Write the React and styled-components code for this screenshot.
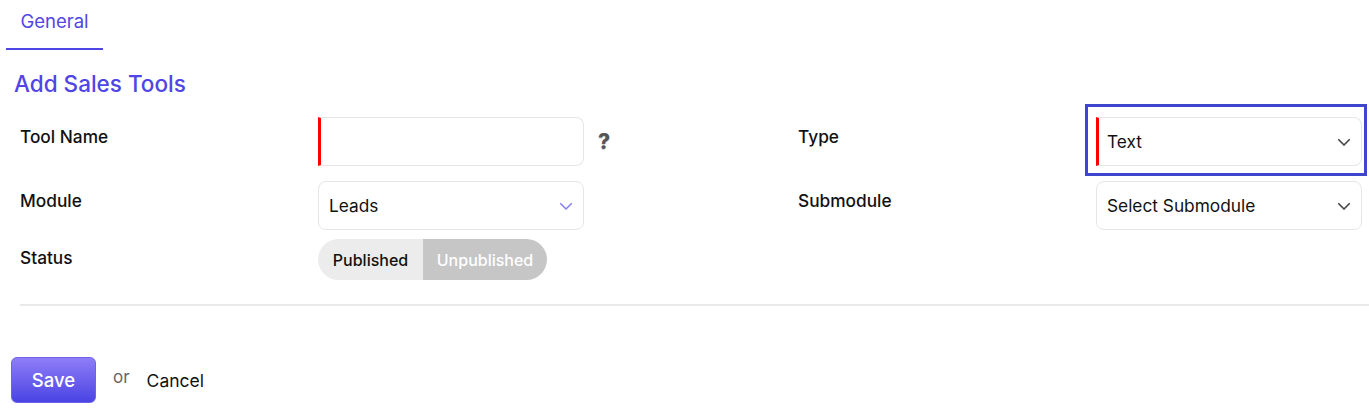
import React from 'react'
import styled, { createGlobalStyle } from 'styled-components'

const GlobalStyle = createGlobalStyle`
    body {
        margin: 0;
        background: #fff;
        font-family: Inter, "Noto Sans", sans-serif;
        color: #111;
    }
`

const Page = styled.div`
    width: 1369px;
    height: 414px;
    overflow: hidden;
`

const Tabs = styled.div`
    display: flex;
    padding-left: 6px;
`

const Tab = styled.div`
    width: 97px;
    height: 50px;
    box-sizing: border-box;
    padding-top: 10px;
    text-align: center;
    font-size: 18.5px;
    color: #4f46e5;
    border-bottom: 2px solid #4f46e5;
`

const Title = styled.h2`
    margin: 19px 0 0 14px;
    font-size: 22.5px;
    font-weight: 500;
    color: #4f46e5;
    line-height: 30px;
`

const Form = styled.div`
    display: grid;
    grid-template-columns: 298px 266px 214px 298px 266px;
    grid-auto-rows: auto;
    row-gap: 15px;
    padding-left: 20px;
    margin-top: 18px;
`

const Label = styled.div`
    font-size: 17.3px;
    font-weight: 450;
    padding-top: ${(p) => p.$top ?? 9}px;
`

const Extra = styled.div`
    display: flex;
    align-items: center;
    padding-left: 14px;
    font-size: 21px;
    font-weight: 800;
    color: #555;
    text-shadow: 0 1px 1px rgba(0, 0, 0, 0.2);
`

const Field = styled.div`
    position: relative;
    height: 49px;
    box-sizing: border-box;
    border: 1px solid #e6e6e6;
    border-radius: 8px;
    display: flex;
    align-items: center;
    justify-content: space-between;
    padding: 0 8px 0 10px;
    font-size: 17.3px;
    background: #fff;
    ${(p) => p.$required && `
        border-left: 3px solid #f00;
        border-top-left-radius: 0;
        border-bottom-left-radius: 0;
        padding-left: 8px;
    `}
`

const Focus = styled.div`
    margin: -13px -5px -10px -11px;
    border: 3px solid #3f45cf;
    padding: 10px 2px 7px 8px;
`

const Chevron = ({ color }) => (
    <svg width="18" height="18" viewBox="0 0 24 24" fill="none" stroke={color} strokeWidth="2.2" strokeLinecap="round" strokeLinejoin="round">
        <path d="M5 9l7 7 7-7" />
    </svg>
)

const Toggle = styled.div`
    display: flex;
    width: 229px;
    height: 41px;
    margin-top: -6px;
    border-radius: 21px;
    overflow: hidden;
`

const Seg = styled.div`
    display: flex;
    align-items: center;
    justify-content: center;
    width: ${(p) => p.$w}px;
    font-size: 16px;
    font-weight: 500;
    background: ${(p) => (p.$active ? '#c6c6c6' : '#ececec')};
    color: ${(p) => (p.$active ? '#fff' : '#111')};
`

const Divider = styled.hr`
    border: none;
    border-top: 2px solid #e9e9e9;
    margin: 24px 0 0 20px;
`

const Actions = styled.div`
    display: flex;
    align-items: center;
    margin: 51px 0 0 11px;
`

const SaveButton = styled.button`
    width: 85px;
    height: 46px;
    border: 1px solid #6d63ea;
    border-radius: 6px;
    background: linear-gradient(#8f7ef7, #4a43e4);
    color: #fff;
    font-family: Inter, sans-serif;
    font-size: 18.5px;
    font-weight: 500;
`

const Or = styled.span`
    margin: -6px 0 0 17px;
    font-size: 17px;
    color: #666;
`

const Cancel = styled.span`
    margin-left: 17px;
    font-size: 17.5px;
    color: #111;
`

export default function App() {
    return (
        <Page>
            <GlobalStyle />
            <Tabs>
                <Tab>General</Tab>
            </Tabs>
            <Title>Add Sales Tools</Title>
            <Form>
                <Label>Tool Name</Label>
                <Field $required />
                <Extra>?</Extra>
                <Label>Type</Label>
                <Focus>
                    <Field $required>
                        <span>Text</span>
                        <Chevron color="#444" />
                    </Field>
                </Focus>

                <Label>Module</Label>
                <Field>
                    <span>Leads</span>
                    <Chevron color="#8a84ee" />
                </Field>
                <div />
                <Label>Submodule</Label>
                <Field>
                    <span>Select Submodule</span>
                    <Chevron color="#444" />
                </Field>

                <Label $top={2}>Status</Label>
                <Toggle>
                    <Seg $w={105}>Published</Seg>
                    <Seg $w={124} $active>Unpublished</Seg>
                </Toggle>
            </Form>
            <Divider />
            <Actions>
                <SaveButton>Save</SaveButton>
                <Or>or</Or>
                <Cancel>Cancel</Cancel>
            </Actions>
        </Page>
    )
}
